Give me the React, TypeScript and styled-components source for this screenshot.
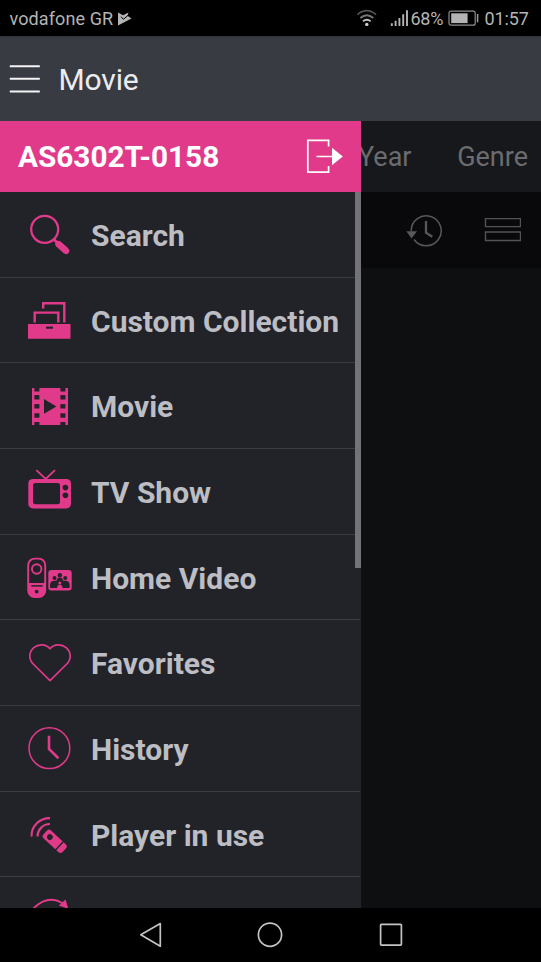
import React from "react";
import styled, { createGlobalStyle } from "styled-components";

const PINK = "#e23a8a";
const PANEL = "#222328";

const GlobalStyle = createGlobalStyle`
  * { box-sizing: border-box; }
  html, body { margin: 0; padding: 0; background: #000; overflow: hidden; }
  body { font-family: Roboto, "Liberation Sans", sans-serif; }
  svg { display: block; flex: none; }
`;

const Screen = styled.div`
  width: 541px;
  height: 962px;
  display: flex;
  flex-direction: column;
  overflow: hidden;
  background: #000;
`;

const StatusBar = styled.div`
  height: 36px;
  flex: none;
  display: flex;
  align-items: center;
  padding: 2px 11.5px 0 9.5px;
  color: #b4b4b4;
  font-size: 18px;
  line-height: 34px;
  white-space: nowrap;
`;

const Carrier = styled.span`
  width: 108.5px;
  letter-spacing: 0.1px;
`;

const StatusRight = styled.div`
  margin-left: auto;
  display: flex;
  align-items: center;
`;

const Percent = styled.span`
  width: 37px;
  letter-spacing: -0.3px;
`;

const Clock = styled.span`
  width: 45px;
  letter-spacing: -0.1px;
`;

const Header = styled.header`
  height: 84.6px;
  flex: none;
  display: flex;
  align-items: center;
  gap: 18.5px;
  padding: 0 0 0 9px;
  background: #393b42;
  border-top: 1px solid #303238;
`;

const Title = styled.h1`
  margin: 0;
  padding-top: 1px;
  font-size: 30px;
  font-weight: 400;
  letter-spacing: -0.15px;
  color: #ececee;
`;

const Body = styled.div`
  height: 787.4px;
  flex: none;
  display: flex;
  overflow: hidden;
`;

const Drawer = styled.nav`
  width: 360.6px;
  flex: none;
  display: flex;
  flex-direction: column;
  background: ${PANEL};
`;

const DeviceBar = styled.div`
  height: 71.5px;
  flex: none;
  display: flex;
  align-items: center;
  justify-content: space-between;
  padding: 1px 17.6px 0 18px;
  background: ${PINK};
  color: #fff;
  font-size: 29.75px;
  font-weight: 700;
`;

const MenuArea = styled.div`
  flex: 1;
  display: flex;
  min-height: 0;
  overflow: hidden;
`;

const MenuList = styled.ul`
  width: 354.6px;
  margin: 0;
  padding: 0;
  list-style: none;
`;

const MenuRow = styled.li`
  width: 360px;
  height: 85.67px;
  display: flex;
  align-items: center;
  gap: 11px;
  padding-left: 20px;
  border-bottom: 1.5px solid #3c3d42;
`;

const Label = styled.span`
  padding-top: 2px;
  font-size: 30px;
  font-weight: 700;
  color: #bdbdc4;
  white-space: nowrap;
`;

const Scrollbar = styled.div`
  position: relative;
  width: 6px;
  height: 375.5px;
  background: #737377;
`;

const Content = styled.main`
  flex: 1;
  min-width: 0;
  display: flex;
  flex-direction: column;
  overflow: hidden;
  background: #0d0f10;
`;

const Tabs = styled.div`
  height: 71.5px;
  flex: none;
  display: flex;
  align-items: center;
  justify-content: space-between;
  padding: 2px 13px 0 0;
  background: #17181b;
  color: #6b6c6f;
  font-size: 27px;
`;

const Tab = styled.span<{ $shift?: number }>`
  margin-left: ${(p) => p.$shift ?? 0}px;
`;

const Tools = styled.div`
  height: 76px;
  flex: none;
  display: flex;
  align-items: center;
  gap: 40px;
  padding: 2px 20px 0 44px;
  background: #09090b;
`;

const NavBar = styled.footer`
  height: 54px;
  flex: none;
  display: flex;
  align-items: center;
  justify-content: space-between;
  padding: 0 137.5px 0 136.5px;
  background: #000;
`;

const Glyph = ({ children }: { children: React.ReactNode }) => (
  <svg width="60" height="60" viewBox="0 0 60 60" fill="none" stroke={PINK}>
    {children}
  </svg>
);

const SearchGlyph = () => (
  <Glyph>
    <circle cx="24.7" cy="25.3" r="13.5" strokeWidth="2.3" />
    <path d="M34 35.5l4 4" strokeWidth="3" />
    <path d="M38 39.7l8 7" strokeWidth="6.4" />
    <path d="M38.5 40.2l7.6 6.6" strokeWidth="6.4" strokeLinecap="round" />
  </Glyph>
);

const CollectionGlyph = () => (
  <Glyph>
    <path d="M14.7 32.5V22.6h23.6v9.9M23.2 18.5v-5.3h21.1v19.3" strokeWidth="2.4" />
    <path d="M8 33.9h42.5v14.8H8z" fill={PINK} stroke="none" />
    <path d="M26 36.6h7v2.1h-7z" fill={PANEL} stroke="none" />
  </Glyph>
);

const FilmGlyph = () => (
  <Glyph>
    <path d="M12 12h36v37H12z" fill={PINK} stroke="none" />
    {[14.4, 40.4].map((x) => (
      <g key={x} fill={PANEL} stroke="none">
        <rect x={x} y="11.5" width="5" height="4" />
        <rect x={x} y="19.1" width="5" height="4.4" />
        <rect x={x} y="28.1" width="5" height="4.4" />
        <rect x={x} y="37.3" width="5" height="4.4" />
        <rect x={x} y="46" width="5" height="4" />
      </g>
    ))}
    <path d="M24 23.1v14.7l12.4-7.3z" fill={PANEL} stroke="none" />
  </Glyph>
);

const TvGlyph = () => (
  <Glyph>
    <path d="M16.3 9.2l9.4 8.7L35 9.2" strokeWidth="1.8" />
    <rect x="8.3" y="18" width="42.7" height="29.4" rx="4.5" fill={PINK} stroke="none" />
    <rect x="13" y="22" width="27" height="21.2" rx="2.5" fill={PANEL} stroke="none" />
    <circle cx="45.4" cy="26.6" r="2.8" fill={PANEL} stroke="none" />
    <circle cx="45.4" cy="34.2" r="2.8" fill={PANEL} stroke="none" />
  </Glyph>
);

const HomeVideoGlyph = () => (
  <Glyph>
    <rect x="8.2" y="11.6" width="17" height="38.4" rx="6.5" strokeWidth="1.9" />
    <circle cx="16.7" cy="22" r="4.7" strokeWidth="1.9" />
    <path d="M8 36.1h17.4V44.2a6 6 0 0 1-6 6h-5.4a6 6 0 0 1-6-6z" fill={PINK} stroke="none" />
    <path d="M11.3 38.9h11.4" stroke={PANEL} strokeWidth="1.5" />
    <circle cx="16.7" cy="44.6" r="1.9" fill={PANEL} stroke="none" />
    <rect x="28.3" y="22.9" width="23.4" height="20.6" rx="3" fill={PINK} stroke="none" />
    <g fill={PANEL} stroke="none">
      <circle cx="39.8" cy="28.2" r="2.2" />
      <circle cx="34.5" cy="31" r="2" />
      <circle cx="45.2" cy="31" r="2" />
      <path d="M30.1 41v-3.8q.6-3.4 4.4-3.4h1.9l1-2.4q2.4-1.6 4.8 0l1 2.4h2q3.8 0 4.4 3.4V41z" />
    </g>
    <circle cx="39.8" cy="35.9" r="1.5" fill={PINK} stroke="none" />
    <path d="M37.2 41.4v-1.7q.5-2 2.6-2t2.6 2v1.7z" fill={PINK} stroke="none" />
  </Glyph>
);

const HeartGlyph = () => (
  <Glyph>
    <path
      d="M30 15.8C26 10.5 18 11 13.8 14.6C8.5 19.3 8.6 26.5 13.2 31L30 47.6L46.8 31C51.4 26.5 51.5 19.3 46.2 14.6C42 11 34 10.5 30 15.8Z"
      strokeWidth="1.7"
      strokeLinejoin="round"
    />
  </Glyph>
);

const HistoryGlyph = () => (
  <Glyph>
    <circle cx="29.4" cy="30.2" r="20.4" strokeWidth="1.5" />
    <path d="M29 17.8v13.2l9.4 9.2" strokeWidth="2.6" />
  </Glyph>
);

const PlayerGlyph = () => (
  <Glyph>
    <path d="M11.5 32.4A18 18 0 0 1 30 14.1M17.6 32.4A12.3 12.3 0 0 1 30 20" strokeWidth="2.2" />
    <g transform="translate(34.7 37.3) rotate(43)" stroke="none">
      <rect x="-13" y="-5.4" width="26" height="10.8" rx="3" fill={PINK} />
      <circle cx="-6.4" cy="0.2" r="2.9" fill={PANEL} />
      <path d="M5.8-5.8h1.4v11.6H5.8z" fill={PANEL} />
    </g>
  </Glyph>
);

const RefreshGlyph = () => (
  <Glyph>
    <path d="M13.4 18.4Q28.5 3.6 43.6 14" strokeWidth="1.8" />
    <path d="M45.6 9.4l2.6 9.4-9.4-3.2z" fill={PINK} stroke="none" />
  </Glyph>
);

const items = [
  { label: "Search", Icon: SearchGlyph },
  { label: "Custom Collection", Icon: CollectionGlyph },
  { label: "Movie", Icon: FilmGlyph },
  { label: "TV Show", Icon: TvGlyph },
  { label: "Home Video", Icon: HomeVideoGlyph },
  { label: "Favorites", Icon: HeartGlyph },
  { label: "History", Icon: HistoryGlyph },
  { label: "Player in use", Icon: PlayerGlyph },
  { label: "", Icon: RefreshGlyph },
];

export default function App() {
  return (
    <>
      <GlobalStyle />
      <Screen>
        <StatusBar>
          <Carrier>vodafone GR</Carrier>
          <svg width="14" height="15" viewBox="0 0 14 15">
            <path d="M0 0.5l5 2.7L10.5 0.5l-1 3.2 4 2.8L0 13.5z" fill="#b4b4b4" />
            <path d="M3 4.7l2.4 2.6L11 2.5" fill="none" stroke="#000" strokeWidth="1" />
          </svg>
          <StatusRight>
            <svg width="54" height="20" viewBox="0 0 54 20" fill="none">
              <path d="M0.5 5.6q9.3-8 18.6 0" stroke="#555" strokeWidth="1.7" />
              <path d="M3.3 9q6.5-5.5 13 0" stroke="#777" strokeWidth="1.8" />
              <path d="M6 12.3q3.8-3.2 7.6 0" stroke="#c2c2c2" strokeWidth="1.8" />
              <circle cx="9.8" cy="15.4" r="1.7" fill="#d0d0d0" />
              <path d="M34.8 17v-2.8M38.6 17v-5.2M42.4 17V9M46.2 17V5.3M50 17V1.3" stroke="#b4b4b4" strokeWidth="1.9" />
            </svg>
            <Percent>68%</Percent>
            <svg width="37" height="18" viewBox="0 0 37 18" fill="none">
              <rect x="1" y="1.2" width="26.2" height="14" rx="2" stroke="#8e8e8e" strokeWidth="1.2" />
              <path d="M3.2 3.3h16.4v9.8H3.2z" fill="#b4b4b4" />
              <path d="M29.6 4v8.3" stroke="#9a9a9a" strokeWidth="1.5" />
            </svg>
            <Clock>01:57</Clock>
          </StatusRight>
        </StatusBar>
        <Header>
          <svg width="31" height="30" viewBox="0 0 31 30">
            <path d="M0.8 2.2h30M0.8 14.7h30M0.8 27.5h30" stroke="#f4f4f5" strokeWidth="2" />
          </svg>
          <Title>Movie</Title>
        </Header>
        <Body>
          <Drawer>
            <DeviceBar>
              <span>AS6302T-0158</span>
              <svg width="38" height="36" viewBox="0 0 38 36" fill="none">
                <path d="M23.6 7.4V1.4H2.8v31.7h20.8v-6.2M11.5 17.5H29" stroke="#fff" strokeWidth="1.7" />
                <path d="M27 8.8l10.8 8.7L27 26.2z" fill="#fff" />
              </svg>
            </DeviceBar>
            <MenuArea>
              <MenuList>
                {items.map(({ label, Icon }, i) => (
                  <MenuRow key={i}>
                    <Icon />
                    <Label>{label}</Label>
                  </MenuRow>
                ))}
              </MenuList>
              <Scrollbar />
            </MenuArea>
          </Drawer>
          <Content>
            <Tabs>
              <Tab $shift={-2.6}>Year</Tab>
              <Tab>Genre</Tab>
            </Tabs>
            <Tools>
              <svg width="38" height="36" viewBox="0 0 38 36" fill="none" stroke="#57585a">
                <path d="M6.2 18.2A15 15 0 1 1 9 26.5" strokeWidth="1.5" />
                <path d="M21 8v11.7l6.3 4" strokeWidth="2.3" />
                <path d="M1.3 18.2h10.8L6.5 25.5z" fill="#57585a" stroke="none" />
              </svg>
              <svg width="38" height="28" viewBox="0 0 38 28" fill="none" stroke="#525355" strokeWidth="1.4">
                <path d="M2.5 1.6h35V9.6h-35zM2.5 15h35v8.5h-35z" />
              </svg>
            </Tools>
          </Content>
        </Body>
        <NavBar>
          <svg width="26" height="28" viewBox="0 0 26 28">
            <path d="M3.8 13.8L23.3 2.6v22.6z" fill="none" stroke="#c4c4c4" strokeWidth="1.7" strokeLinejoin="round" />
          </svg>
          <svg width="28" height="28" viewBox="0 0 28 28">
            <circle cx="14" cy="13.7" r="11.6" fill="none" stroke="#c4c4c4" strokeWidth="1.7" />
          </svg>
          <svg width="26" height="28" viewBox="0 0 26 28">
            <rect x="2.6" y="3.3" width="20.8" height="20.8" rx="0.8" fill="none" stroke="#c4c4c4" strokeWidth="1.7" />
          </svg>
        </NavBar>
      </Screen>
    </>
  );
}
